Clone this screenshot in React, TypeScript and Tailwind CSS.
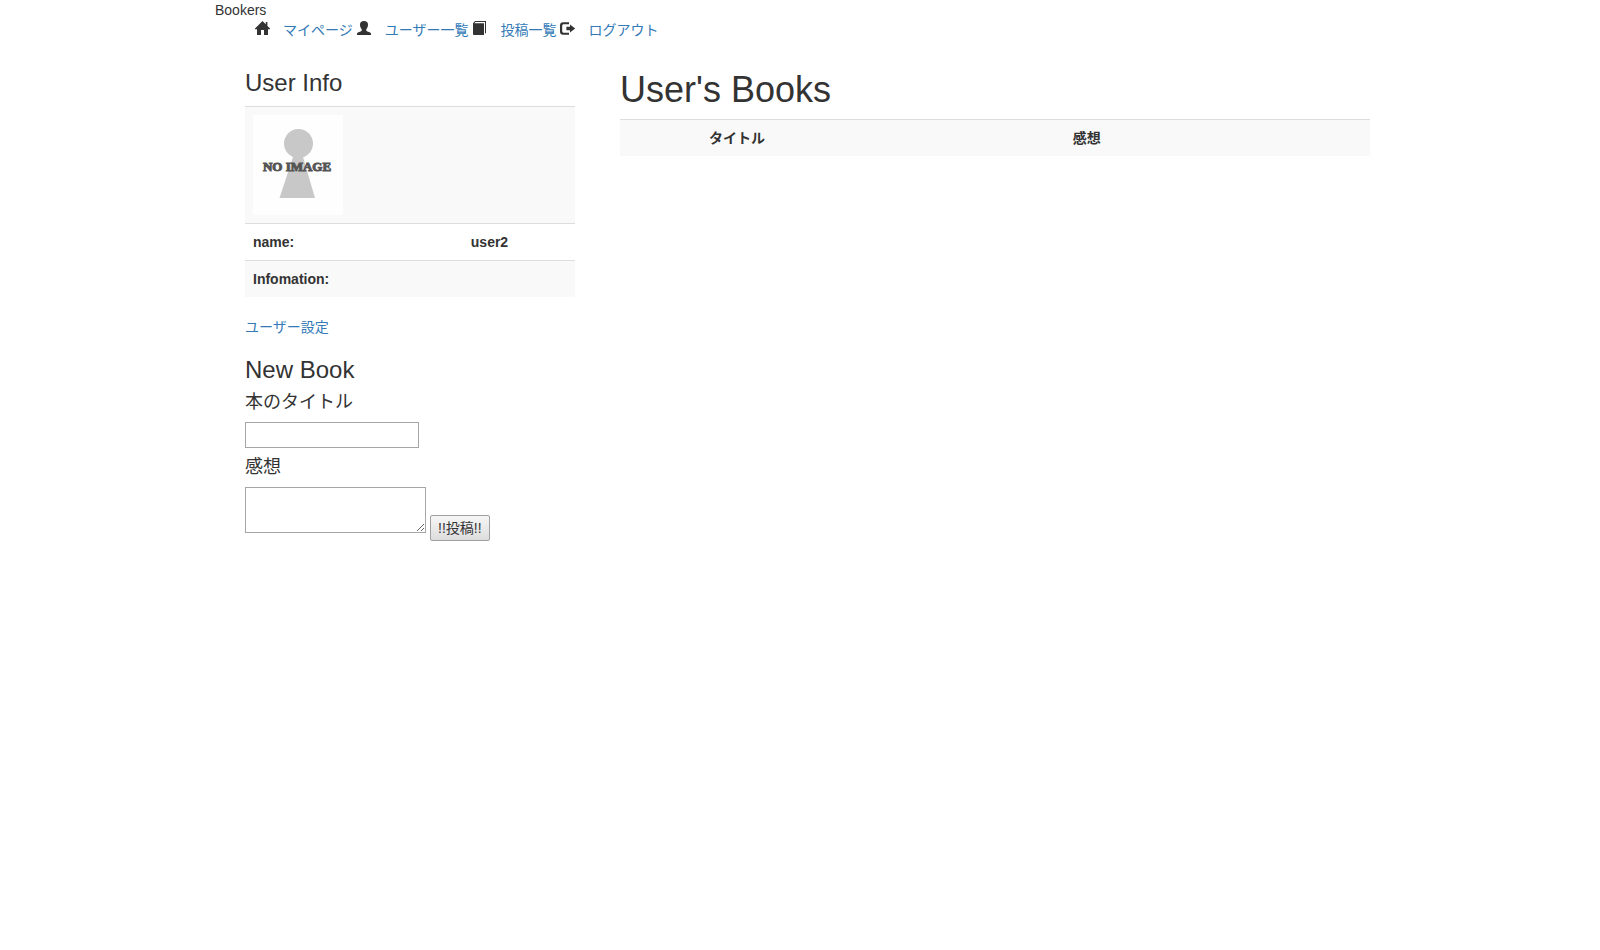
import type { ReactNode } from "react";

const iconClass = "size-4 shrink-0";

function HomeIcon() {
  return (
    <svg viewBox="0 0 16 16" className={iconClass} fill="currentColor" aria-hidden="true">
      <path d="M7.5 0 L15 7.6 V8.2 H13 V14 H9 V9 H6 V14 H2 V8.2 H0 V7.6 Z M10.8 1 H12.4 V5 L10.8 3.6 Z" />
    </svg>
  );
}

function UserIcon() {
  return (
    <svg viewBox="0 0 16 16" className={iconClass} fill="currentColor" aria-hidden="true">
      <path d="M7 0 C9.6 0 11 1.2 11 3.6 C11 5.6 10.3 7.2 9.3 8.2 V9.3 C9.3 9.9 9.7 10.1 10.5 10.4 C12.5 11.1 14 11.6 14 12.6 V14 H0 V12.6 C0 11.6 1.5 11.1 3.5 10.4 C4.3 10.1 4.7 9.9 4.7 9.3 V8.2 C3.7 7.2 3 5.6 3 3.6 C3 1.2 4.4 0 7 0 Z" />
    </svg>
  );
}

function BookIcon() {
  return (
    <svg viewBox="0 0 16 16" className={iconClass} fill="currentColor" aria-hidden="true">
      <path d="M3 0 H14 V12 L13 12.6 V1 H3.4 L2.4 2.2 H12 V14 H2 C1.4 14 1 13.6 1 13 V2.2 Z" />
    </svg>
  );
}

function LogoutIcon() {
  return (
    <svg viewBox="0 0 16 16" className={iconClass} fill="currentColor" aria-hidden="true">
      <path d="M3 1.2 H9 V3.2 H4 C2.8 3.2 2.2 3.8 2.2 5 V10 C2.2 11.2 2.8 11.8 4 11.8 H9 V13.8 H3 C1.2 13.8 0 12.6 0 10.8 V4.2 C0 2.4 1.2 1.2 3 1.2 Z M10 3.4 L15.2 7.5 L10 11.6 V9.2 H6.4 V5.8 H10 Z" />
    </svg>
  );
}

function NavItem({ icon, children }: { icon: ReactNode; children: string }) {
  return (
    <li className="flex items-start gap-3">
      <span className="pt-px">{icon}</span>
      <a href="#" className="text-[#337ab7] hover:underline">{children}</a>
    </li>
  );
}

function Avatar() {
  return (
    <svg viewBox="0 0 90 100" width="90" height="100" role="img" aria-label="NO IMAGE">
      <rect width="90" height="100" fill="#fefefe" />
      <circle cx="45.5" cy="28.5" r="14.5" fill="#c8c8c8" />
      <path d="M40 42 H50 L62 83 H26.5 Z" fill="#c8c8c8" />
      <text x="44" y="56" textAnchor="middle" fontFamily="Liberation Serif, serif" fontWeight="bold" fontSize="13" fill="#555" stroke="#555" strokeWidth="1">
        NO IMAGE
      </text>
    </svg>
  );
}

export default function App() {
  return (
    <div className="mx-auto max-w-[1170px] font-['Liberation_Sans','Noto_Sans_CJK_JP',sans-serif] text-sm leading-5 text-[#333]">
      <header>
        <div className="h-5">Bookers</div>
        <nav>
          <ul className="flex flex-wrap gap-1 pl-10">
            <NavItem icon={<HomeIcon />}>マイページ</NavItem>
            <NavItem icon={<UserIcon />}>ユーザー一覧</NavItem>
            <NavItem icon={<BookIcon />}>投稿一覧</NavItem>
            <NavItem icon={<LogoutIcon />}>ログアウト</NavItem>
          </ul>
        </nav>
      </header>

      <main className="mt-[30px] grid grid-cols-3">
        <section className="px-[30px]">
          <h3 className="mb-2.5 text-2xl leading-[26px]">User Info</h3>
          <table className="mb-5 w-full table-fixed text-left">
            <colgroup>
              <col className="w-[66%]" />
              <col />
            </colgroup>
            <tbody>
              <tr className="border-t border-[#ddd] bg-[#f9f9f9]">
                <td colSpan={2} className="p-2"><Avatar /></td>
              </tr>
              <tr className="border-t border-[#ddd]">
                <th className="p-2">name:</th>
                <th className="p-2">user2</th>
              </tr>
              <tr className="border-t border-[#ddd] bg-[#f9f9f9]">
                <th className="p-2">Infomation:</th>
                <th className="p-2"></th>
              </tr>
            </tbody>
          </table>
          <a href="#" className="block text-[#337ab7] hover:underline">ユーザー設定</a>

          <h3 className="mt-5 mb-2.5 text-2xl leading-[26px]">New Book</h3>
          <form onSubmit={(event) => event.preventDefault()}>
            <label htmlFor="title" className="mb-2.5 block text-lg leading-[19px]">本のタイトル</label>
            <input id="title" type="text" className="block h-[26px] w-[174px] border border-[#a6a6a6] px-0.5" />
            <label htmlFor="body" className="my-2.5 block text-lg leading-[19px]">感想</label>
            <div className="flex items-start gap-1">
              <textarea id="body" className="h-[46px] w-[181px] border border-[#a6a6a6] p-0.5" />
              <button type="submit" className="mt-7 h-[26px] rounded-[2px] border border-[#a0a0a0] bg-linear-to-b from-[#f6f6f6] to-[#dddddd] px-[7px]">
                !!投稿!!
              </button>
            </div>
          </form>
        </section>

        <section className="col-span-2 px-[15px]">
          <h1 className="mb-2.5 text-4xl leading-[39px]">User's Books</h1>
          <table className="w-full table-fixed text-left">
            <colgroup>
              <col className="w-[10.8%]" />
              <col className="w-[48.5%]" />
              <col />
            </colgroup>
            <thead>
              <tr className="border-t border-[#ddd] bg-[#f9f9f9]">
                <th className="p-2"></th>
                <th className="p-2">タイトル</th>
                <th className="p-2">感想</th>
              </tr>
            </thead>
          </table>
        </section>
      </main>
    </div>
  );
}
